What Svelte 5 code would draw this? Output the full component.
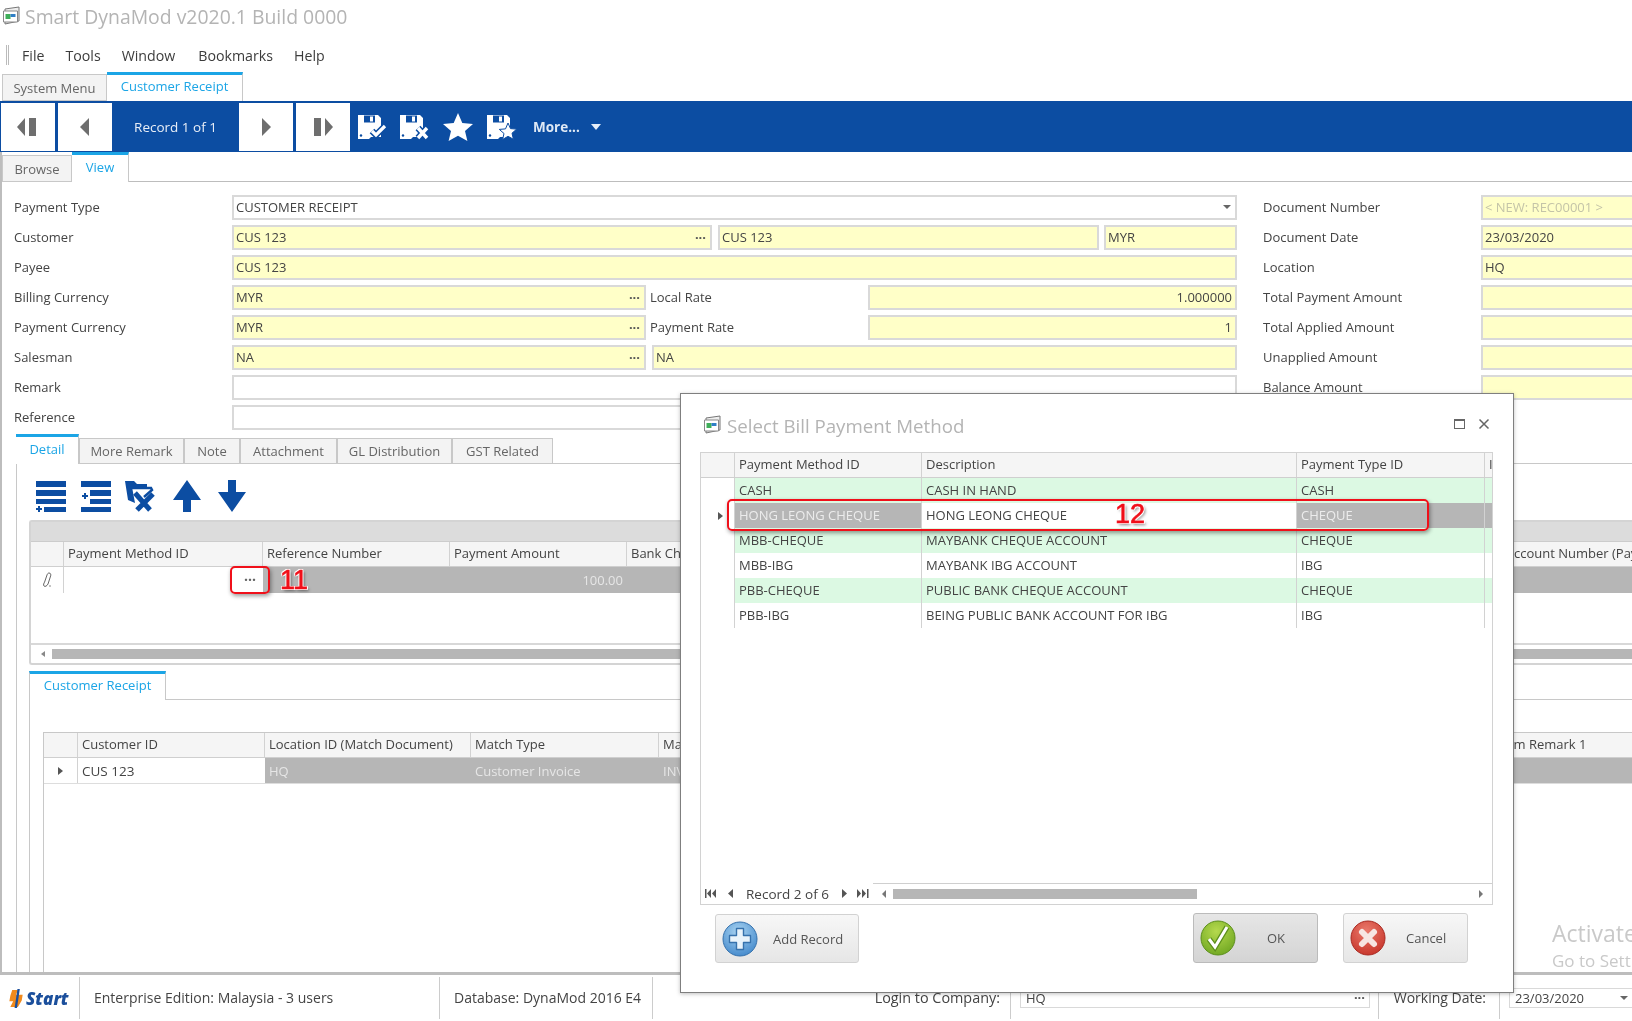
<script>
  const leftLabels = ['Payment Type','Customer','Payee','Billing Currency','Payment Currency','Salesman','Remark','Reference'];
  const rightRows = [
    ['Document Number','< NEW: REC00001 >','ghost'],
    ['Document Date','23/03/2020',''],
    ['Location','HQ',''],
    ['Total Payment Amount','',''],
    ['Total Applied Amount','',''],
    ['Unapplied Amount','',''],
    ['Balance Amount','','']
  ];
  const detailTabs = ['More Remark','Note','Attachment','GL Distribution','GST Related'];
  const methods = [
    ['CASH','CASH IN HAND','CASH','g'],
    ['HONG LEONG CHEQUE','HONG LEONG CHEQUE','CHEQUE','s'],
    ['MBB-CHEQUE','MAYBANK CHEQUE ACCOUNT','CHEQUE','g'],
    ['MBB-IBG','MAYBANK IBG ACCOUNT','IBG',''],
    ['PBB-CHEQUE','PUBLIC BANK CHEQUE ACCOUNT','CHEQUE','g'],
    ['PBB-IBG','BEING PUBLIC BANK ACCOUNT FOR IBG','IBG','']
  ];
</script>

{#snippet floppy()}
  <path d="M1 1h20l3 3v19H14l-2 2H1z" fill="#fff"/>
  <path d="M7 1.500h11v7H7z" fill="#0c4da2"/><path d="M13 2.500h3v5h-3z" fill="#fff"/>
  <circle cx="4" cy="21.500" r="1.200" fill="#0c4da2"/>
{/snippet}

{#snippet appIcon()}
  <svg class="appicon" viewBox="0 0 20 20" width="20" height="20">
    <path d="M3 3l14-2v14L3 18z" fill="#eee" stroke="#777"/>
    <path d="M1.500 5h14v11h-14z" fill="#fff" stroke="#888"/>
    <path d="M3.500 8h5v5h-5z" fill="#3fae5a"/><path d="M8.500 8h5v3h-5z" fill="#2f7fc6"/>
  </svg>
{/snippet}

<div class="app">
  <header class="title">
    {@render appIcon()}
    <span>Smart DynaMod v2020.1 Build 0000</span>
  </header>

  <nav class="menu">
    <i class="grip"></i>
    <span class="m1">File</span><span class="m2">Tools</span><span class="m3">Window</span><span class="m4">Bookmarks</span><span class="m5">Help</span>
  </nav>

  <div class="doctabs">
    <div class="tab off systab">System Menu</div>
    <div class="tab on custtab">Customer Receipt</div>
  </div>

  <div class="toolbar">
    <div class="navbtn"><svg viewBox="0 0 22 22" width="22" height="22"><path d="M8 2v18L0 11zM12 2h7v18h-7z" fill="#6e6e6e"/></svg></div>
    <div class="navbtn"><svg viewBox="0 0 22 22" width="22" height="22"><path d="M15 2v18L6 11z" fill="#6e6e6e"/></svg></div>
    <div class="rec">Record 1 of 1</div>
    <div class="navbtn"><svg viewBox="0 0 22 22" width="22" height="22"><path d="M7 2v18l9-9z" fill="#6e6e6e"/></svg></div>
    <div class="navbtn"><svg viewBox="0 0 22 22" width="22" height="22"><path d="M2 2h7v18H2zM13 2v18l8-9z" fill="#6e6e6e"/></svg></div>
    <svg class="tool t1" viewBox="0 0 31 26" width="31" height="26">{@render floppy()}<path d="M15 17l4 4 9-9" fill="none" stroke="#0c4da2" stroke-width="6.500"/><path d="M15 17l4 4 9-9" fill="none" stroke="#fff" stroke-width="3.200"/></svg>
    <svg class="tool t2" viewBox="0 0 31 26" width="31" height="26">{@render floppy()}<path d="M19 14l9 10M28 14l-9 10" stroke="#0c4da2" stroke-width="6.500"/><path d="M19 14l9 10M28 14l-9 10" stroke="#fff" stroke-width="3.400"/></svg>
    <svg class="tool t3" viewBox="0 0 30 28" width="30" height="28"><path d="M15 0l4.300 10 10.700.9-8 7.100 2.400 10L15 22.800 5.600 28 8 18 0 10.900 10.700 10z" fill="#fff"/></svg>
    <svg class="tool t4" viewBox="0 0 31 26" width="31" height="26">{@render floppy()}<path d="M22 9l2.500 5.600 6.200.5-4.700 4.100 1.400 6L22 22.300 16.600 25.500l1.400-6-4.700-4.100 6.200-.5z" fill="#fff" stroke="#0c4da2" stroke-width="1"/></svg>
    <span class="more">More...</span>
    <i class="morecaret"></i>
  </div>

  <main class="pane">
    <div class="subtabs">
      <div class="tab off browse">Browse</div>
      <div class="tab on viewtab">View</div>
    </div>

    <section class="form">
      <div class="labels">
        {#each leftLabels as l}<div class="lab">{l}</div>{/each}
      </div>
      <div class="fields">
        <div class="row"><div class="inp white grow">CUSTOMER RECEIPT<i class="ddarrow"></i></div></div>
        <div class="row">
          <div class="inp w480">CUS 123<b class="dots">···</b></div>
          <div class="inp w381">CUS 123</div>
          <div class="inp grow">MYR</div>
        </div>
        <div class="row"><div class="inp grow">CUS 123</div></div>
        <div class="row">
          <div class="inp w414">MYR<b class="dots">···</b></div>
          <div class="inlab">Local Rate</div>
          <div class="inp grow num">1.000000</div>
        </div>
        <div class="row">
          <div class="inp w414">MYR<b class="dots">···</b></div>
          <div class="inlab">Payment Rate</div>
          <div class="inp grow num">1</div>
        </div>
        <div class="row">
          <div class="inp w414">NA<b class="dots">···</b></div>
          <div class="inp grow sales">NA</div>
        </div>
        <div class="row"><div class="inp white grow"></div></div>
        <div class="row"><div class="inp white grow"></div></div>
      </div>
      <div class="labels rightlabs">
        {#each rightRows as r}<div class="lab">{r[0]}</div>{/each}
      </div>
      <div class="fields rightf">
        {#each rightRows as r}<div class="row"><div class="inp grow {r[2]}">{r[1]}</div></div>{/each}
      </div>
    </section>

    <div class="detailtabs">
      <div class="tab on dt0">Detail</div>
      {#each detailTabs as t, i}<div class="tab off dt{i + 1}">{t}</div>{/each}
    </div>

    <section class="detail">
      <div class="icons">
        <svg class="ic i1" viewBox="0 0 30 32" width="30" height="32" fill="#0c4da2"><path d="M0 1h30v6H0zM0 10h30v6H0zM0 19h30v5H0zM8 27h22v5H8zM2 26h2v2h2v2H4v2H2v-2H0v-2h2z"/></svg>
        <svg class="ic i2" viewBox="0 0 30 32" width="30" height="32" fill="#0c4da2"><path d="M0 1h30v6H0zM9 10h21v6H9zM9 19h21v5H9zM0 27h30v5H0zM3 13h2v2h2v2H5v2H3v-2H1v-2h2z"/></svg>
        <svg class="ic i3" viewBox="0 0 31 32" width="31" height="32"><path d="M0 1h9l3 3h10v3H7l3 16L3 20z" fill="#0c4da2"/><path d="M7 8l19 0 1 2-8 7" fill="none" stroke="#0c4da2" stroke-width="2.500"/><path d="M10 13l15 17M28 14L12 30" stroke="#0c4da2" stroke-width="5"/></svg>
        <svg class="ic i4" viewBox="0 0 28 32" width="28" height="32" fill="#0c4da2"><path d="M14 0l14 20H18v12h-8V20H0z"/></svg>
        <svg class="ic i5" viewBox="0 0 28 32" width="28" height="32" fill="#0c4da2"><path d="M10 0h8v12h10L14 32 0 12h10z"/></svg>
      </div>

      <div class="grid1">
        <div class="band"></div>
        <div class="ghead">
          <div class="gc c0"></div>
          <div class="gc c1">Payment Method ID</div>
          <div class="gc c2">Reference Number</div>
          <div class="gc c3">Payment Amount</div>
          <div class="gc c4">Bank Charges</div>
          <div class="gc c5">Bank Account Number (Payment)</div>
        </div>
        <div class="grow1">
          <div class="gi"><svg viewBox="0 0 10 16" width="10" height="16"><path d="M7 1c2 0 2 2 1.600 3L6 12c-1 2-3 3-4 2s0-3 .6-4L5 3c.5-1.200 1-2 2-2z" fill="none" stroke="#666" stroke-width="1"/><path d="M7 14h2" stroke="#888"/></svg></div>
          <div class="gw"></div>
          <div class="gs"><span class="amt">100.00</span></div>
        </div>
        <div class="gempty"></div>
        <div class="gscroll"><i class="al"></i><div class="thumb"></div></div>
      </div>

      <section class="lower">
        <div class="lowertabs"><div class="tab on lt">Customer Receipt</div></div>
        <div class="grid2">
          <div class="ghead h2">
            <div class="gc d0"></div>
            <div class="gc d1">Customer ID</div>
            <div class="gc d2">Location ID (Match Document)</div>
            <div class="gc d3">Match Type</div>
            <div class="gc d4">Match Document</div>
            <div class="gc d5">Item Remark 1</div>
          </div>
          <div class="grow2">
            <div class="gi g2i"><i class="ar"></i></div>
            <div class="cw">CUS 123</div>
            <div class="cs s1">HQ</div>
            <div class="cs s2">Customer Invoice</div>
            <div class="cs s3">INV</div>
          </div>
          <div class="g2rest"></div>
        </div>
      </section>
    </section>
  </main>

  <footer class="status">
    <div class="start">
      <svg viewBox="0 0 17 20" width="17" height="19"><path d="M4 1h6L8 6h7l-1 6-4 7H2l3-6H1l1-6z" fill="#f08a1d"/><path d="M9.500 0h2.500L9 20H6.500z" fill="#1b4f9c"/></svg>
      <em>Start</em>
    </div>
    <div class="sect s-a">Enterprise Edition: Malaysia - 3 users</div>
    <div class="sect s-b">Database: DynaMod 2016 E4</div>
    <div class="sect s-c">Login to Company:</div>
    <div class="sect s-d"><div class="sinp">HQ<b class="dots">···</b></div></div>
    <div class="sect s-e">Working Date:</div>
    <div class="sect s-f"><div class="sinp date">23/03/2020<i class="ddarrow"></i></div></div>
  </footer>

  <div class="note box11"></div>
  <div class="ann a11">11</div>
  <div class="ellip">···</div>

  <div class="watermark"><div class="w1">Activate Windows</div><div class="w2">Go to Settings to activate Windows.</div></div>

  <div class="dialog">
    <div class="dtitle">
      {@render appIcon()}
      <span>Select Bill Payment Method</span>
      <i class="restore"></i>
      <svg class="close" viewBox="0 0 12 12" width="12" height="12"><path d="M1.500 1.500l9 9M10.500 1.500l-9 9" stroke="#666" stroke-width="1.500"/></svg>
    </div>
    <div class="dgrid">
      <div class="dhead">
        <div class="dc e0"></div>
        <div class="dc e1">Payment Method ID</div>
        <div class="dc e2">Description</div>
        <div class="dc e3">Payment Type ID</div>
        <div class="dc e4">I</div>
      </div>
      {#each methods as m}
        <div class="drow {m[3]}">
          <div class="e0 mark">{#if m[3] === 's'}<i class="ar"></i>{/if}</div>
          <div class="dcell e1">{m[0]}</div>
          <div class="dcell e2 mid">{m[1]}</div>
          <div class="dcell e3">{m[2]}</div>
          <div class="e4 tail"></div>
        </div>
      {/each}
      <div class="dfill"></div>
      <div class="dfoot">
        <div class="pager">
          <svg viewBox="0 0 12 9" width="12" height="9" fill="#555"><path d="M0 0h1.500v9H0zM6 0v9L2 4.500zM11 0v9L7 4.500z"/></svg>
          <svg class="p2" viewBox="0 0 5 9" width="5" height="9" fill="#555"><path d="M5 0v9L0 4.500z"/></svg>
          <span>Record 2 of 6</span>
          <svg class="p3" viewBox="0 0 5 9" width="5" height="9" fill="#555"><path d="M0 0v9l5-4.500z"/></svg>
          <svg class="p4" viewBox="0 0 12 9" width="12" height="9" fill="#555"><path d="M0 0v9l4-4.500zM5 0v9l4-4.500zM10 0h1.500v9H10z"/></svg>
        </div>
        <div class="dscroll">
          <svg viewBox="0 0 4 8" width="4" height="8" fill="#777"><path d="M4 0v8L0 4z"/></svg>
          <div class="dthumb"></div>
          <svg class="rg" viewBox="0 0 4 8" width="4" height="8" fill="#777"><path d="M0 0v8l4-4z"/></svg>
        </div>
      </div>
    </div>
    <div class="dbtns">
      <div class="btn add">
        <svg viewBox="0 0 36 36" width="36" height="36"><defs><radialGradient id="bl" cx=".45" cy=".3" r=".8"><stop offset="0" stop-color="#a9d4f2"/><stop offset="1" stop-color="#3a82c8"/></radialGradient></defs><circle cx="18" cy="18" r="17" fill="url(#bl)" stroke="#3672ad"/><path d="M14.500 7.500h7v7h7v7h-7v7h-7v-7h-7v-7h7z" fill="#e8f3fb" stroke="#3672ad" stroke-width="1.400" stroke-linejoin="round"/></svg>
        <span class="at">Add Record</span>
      </div>
      <div class="btn ok">
        <svg viewBox="0 0 36 36" width="36" height="36"><defs><radialGradient id="gr" cx=".45" cy=".3" r=".8"><stop offset="0" stop-color="#b5d94e"/><stop offset="1" stop-color="#6aa31e"/></radialGradient></defs><circle cx="18" cy="18" r="17" fill="url(#gr)" stroke="#5c8f1c"/><path d="M9 19l6 8L27 7" fill="none" stroke="#5c8f1c" stroke-width="5.500"/><path d="M9 19l6 8L27 7" fill="none" stroke="#fff" stroke-width="3"/></svg>
        <span class="ot">OK</span>
      </div>
      <div class="btn cancel">
        <svg viewBox="0 0 36 36" width="36" height="36"><defs><radialGradient id="rd" cx=".45" cy=".3" r=".8"><stop offset="0" stop-color="#ea7a6c"/><stop offset="1" stop-color="#c42f25"/></radialGradient></defs><circle cx="18" cy="18" r="17" fill="url(#rd)" stroke="#a92a22"/><path d="M12 12l12 12M24 12L12 24" stroke="#f7e6e3" stroke-width="6" stroke-linecap="round"/></svg>
        <span class="ct">Cancel</span>
      </div>
    </div>
    <div class="note box12"></div>
    <div class="ann a12">12</div>
  </div>
</div>

<style>
  :global(body) { margin: 0; background: #fff; }
  .app {
    position: relative; width: 1632px; height: 1021px; overflow: hidden; background: #fff;
    display: flex; flex-direction: column;
    font-family: "Open Sans", "DejaVu Sans", sans-serif; font-size: 13px; color: #444;
    filter: blur(0.4px);
  }
  .title { height: 36px; display: flex; align-items: center; padding: 0 0 4px 2px; box-sizing: border-box; flex: none; }
  .title span { margin-left: 3px; font-size: 19.400px; color: #b4b4b4; }
  .appicon { flex: none; }

  .menu { height: 36px; flex: none; display: flex; align-items: center; padding-top: 2px; box-sizing: border-box; font-size: 14.200px; color: #3c3c3c; }
  .grip { width: 3px; height: 20px; margin-left: 6px; border-left: 1px solid #bbb; border-right: 1px solid #bbb; box-sizing: border-box; }
  .m1 { margin-left: 13px; } .m2 { margin-left: 21px; } .m3 { margin-left: 21px; } .m4 { margin-left: 23px; } .m5 { margin-left: 21px; }

  .tab { box-sizing: border-box; display: flex; align-items: center; justify-content: center; flex: none; }
  .tab.off { background: #f3f3f3; border: 1px solid #c8c8c8; color: #666; }
  .tab.on { background: #fff; border-top: 3px solid #1ba5e6; border-right: 1px solid #c8c8c8; color: #1ba5e6; padding-bottom: 4px; }

  .doctabs { height: 29px; flex: none; display: flex; align-items: flex-end; padding-left: 2px; }
  .systab { width: 105px; height: 27px; }
  .custtab { width: 136px; height: 29px; }

  .toolbar { height: 51px; flex: none; background: #0c4da2; display: flex; align-items: center; padding-left: 1px; color: #fff; box-sizing: border-box; padding-top: 1px; }
  .navbtn { width: 54px; height: 48px; background: #fff; margin-right: 3px; display: flex; align-items: center; justify-content: center; flex: none; }
  .rec { width: 121px; margin-right: 3px; text-align: center; color: #e8eef7; font-size: 13.500px; flex: none; }
  .tool { flex: none; }
  .t1 { margin-left: 4px; } .t2 { margin-left: 11px; } .t3 { margin-left: 13px; } .t4 { margin-left: 13px; }
  .more { margin-left: 16px; font-weight: 700; font-size: 13.500px; color: #dfe9f5; }
  .morecaret { margin-left: 11px; width: 0; height: 0; border-left: 5px solid transparent; border-right: 5px solid transparent; border-top: 6px solid #e6eef8; }

  .pane { flex: 1; min-height: 0; display: flex; flex-direction: column; border-left: 2px solid #bdbdbd; border-bottom: 3px solid #bdbdbd; box-sizing: border-box; }
  .subtabs { height: 30px; flex: none; display: flex; align-items: flex-end; }
  .subtabs::after { content: ""; flex: 1; border-bottom: 1px solid #bdbdbd; height: 0; }
  .browse { width: 70px; height: 27px; border-left: 1px solid #c8c8c8; }
  .viewtab { width: 57px; height: 30px; border-bottom: 0; }

  .form { flex: none; height: 252px; box-sizing: border-box; padding: 13px 0 0 12px; display: flex; }
  .labels { width: 218px; flex: none; display: flex; flex-direction: column; gap: 5px; }
  .lab { height: 25px; line-height: 24px; white-space: nowrap; }
  .fields { width: 1005px; flex: none; display: flex; flex-direction: column; gap: 5px; }
  .rightlabs { margin-left: 26px; }
  .rightf { width: 170px; }
  .row { display: flex; height: 25px; gap: 6px; }
  .inp { height: 25px; box-sizing: border-box; border: 2px solid #d9d9d9; background: #ffffc8; color: #444; line-height: 20px; padding-left: 2px; position: relative; white-space: nowrap; flex: none; }
  .inp.white { background: #fff; }
  .grow { flex: 1; }
  .w480 { width: 480px; } .w381 { width: 381px; } .w414 { width: 414px; }
  .row .w480 + .w381 + .grow { margin-left: -1px; }
  .inlab { width: 212px; margin-left: -2px; line-height: 24px; flex: none; }
  .num { text-align: right; padding-right: 3px; }
  .ghost { color: #c4c4a8; }
  .dots { position: absolute; right: 4px; top: 0; font-weight: 700; color: #555; font-size: 13px; }
  .ddarrow { position: absolute; right: 4px; top: 8px; width: 0; height: 0; border-left: 4px solid transparent; border-right: 4px solid transparent; border-top: 4px solid #666; }

  .detailtabs { height: 30px; flex: none; display: flex; align-items: flex-end; margin-left: 14px; }
  .detailtabs::after { content: ""; flex: 1; border-bottom: 1px solid #c8c8c8; height: 0; }
  .dt0 { width: 63px; height: 30px; }
  .dt1 { width: 105px; height: 26px; } .dt2 { width: 56px; height: 26px; } .dt3 { width: 97px; height: 26px; } .dt4 { width: 115px; height: 26px; } .dt5 { width: 101px; height: 26px; }

  .detail { flex: 1; min-height: 0; margin-left: 14px; border-left: 1px solid #c8c8c8; display: flex; flex-direction: column; }
  .icons { height: 56px; flex: none; display: flex; align-items: flex-start; padding-top: 16px; box-sizing: border-box; }
  .ic { flex: none; }
  .i1 { margin-left: 19px; } .i2 { margin-left: 15px; } .i3 { margin-left: 14px; } .i4 { margin-left: 17px; } .i5 { margin-left: 17px; }

  .grid1 { flex: none; margin-left: 12px; height: 145px; border: 2px solid #d4d4d4; border-right: 0; border-radius: 3px 0 0 3px; box-sizing: border-box; display: flex; flex-direction: column; width: 1640px; }
  .band { height: 19px; background: #dcdcdc; flex: none; border-bottom: 1px solid #ccc; }
  .ghead { height: 25px; flex: none; display: flex; background: #f5f5f5; border-bottom: 1px solid #cfcfcf; box-sizing: border-box; }
  .gc { box-sizing: border-box; border-right: 1px solid #d2d2d2; line-height: 22px; padding-left: 4px; white-space: nowrap; overflow: hidden; flex: none; }
  .c0 { width: 33px; } .c1 { width: 199px; } .c2 { width: 187px; } .c3 { width: 177px; } .c4 { width: 841px; } .c5 { width: 203px; }
  .grow1 { height: 26px; flex: none; display: flex; }
  .gi { width: 33px; flex: none; border-right: 1px solid #d2d2d2; box-sizing: border-box; display: flex; align-items: center; justify-content: center; }
  .gw { width: 199px; flex: none; }
  .gs { flex: 1; background: #b6b6b6; color: #e6e6e6; position: relative; }
  .amt { position: absolute; left: 300px; line-height: 26px; width: 60px; text-align: right; }
  .gempty { flex: 1; border-bottom: 2px solid #d8d8d8; }
  .gscroll { height: 18px; flex: none; display: flex; align-items: center; padding-left: 10px; box-sizing: border-box; }
  .al { width: 0; height: 0; border-top: 3.500px solid transparent; border-bottom: 3.500px solid transparent; border-right: 4px solid #888; margin-right: 7px; }
  .thumb { flex: 1; height: 10px; background: #b6b6b6; }

  .lower { flex: 1; min-height: 0; margin: 6px 0 0 12px; border-left: 1px solid #c8c8c8; display: flex; flex-direction: column; }
  .lowertabs { height: 29px; flex: none; display: flex; align-items: flex-end; margin-left: -1px; }
  .lowertabs::after { content: ""; flex: 1; border-bottom: 1px solid #c8c8c8; height: 0; }
  .lt { width: 137px; height: 29px; border-left: 1px solid #c8c8c8; }
  .grid2 { flex: 1; min-height: 0; margin: 32px 0 0 13px; border-left: 1px solid #c8c8c8; width: 1640px; border-top: 1px solid #c8c8c8; display: flex; flex-direction: column; }
  .d0 { width: 34px; } .d1 { width: 187px; } .d2 { width: 206px; } .d3 { width: 188px; } .d4 { width: 835px; } .d5 { width: 190px; }
  .grow2 { height: 26px; flex: none; display: flex; line-height: 26px; border-bottom: 1px solid #ddd; box-sizing: border-box; }
  .g2i { width: 34px; }
  .cw { width: 187px; padding-left: 4px; box-sizing: border-box; flex: none; font-size: 13.500px; }
  .cs { background: #b6b6b6; color: #e6e6e6; padding-left: 4px; box-sizing: border-box; flex: none; }
  .s1 { width: 206px; } .s2 { width: 188px; } .s3 { flex: 1; }
  .ar { width: 0; height: 0; border-top: 4.500px solid transparent; border-bottom: 4.500px solid transparent; border-left: 5px solid #555; }
  .g2rest { flex: 1; }

  .status { height: 46px; flex: none; display: flex; align-items: center; font-size: 14px; }
  .start { width: 80px; height: 42px; flex: none; display: flex; align-items: center; padding-left: 8px; box-sizing: border-box; border-right: 1px solid #ccc; }
  .start em { font: italic 800 17px "Open Sans", sans-serif; color: #1b4f9c; margin-left: 1px; }
  .sect { height: 42px; line-height: 42px; flex: none; box-sizing: border-box; white-space: nowrap; }
  .s-a { width: 360px; padding-left: 14px; border-right: 1px solid #ccc; }
  .s-b { width: 213px; padding-left: 14px; border-right: 1px solid #ccc; }
  .s-c { width: 358px; text-align: right; padding-right: 10px; border-right: 1px solid #ccc; font-size: 14.400px; }
  .s-d { width: 368px; padding-left: 9px; border-right: 1px solid #ccc; }
  .s-e { width: 121px; text-align: right; padding-right: 13px; border-right: 1px solid #ccc; }
  .s-f { flex: 1; padding-left: 9px; }
  .sinp { height: 20px; line-height: 18px; margin-top: 11px; border: 1px solid #d9d9d9; font-size: 13px; position: relative; padding-left: 5px; width: 350px; box-sizing: border-box; }
  .date { width: 123px; border-right: 0; }
  .sinp .dots { top: -1px; }
  .sinp .ddarrow { top: 7px; }

  .watermark { position: absolute; left: 1552px; top: 918px; white-space: nowrap; color: #c9c9c9; }
  .w1 { font-size: 23px; line-height: 30px; }
  .w2 { font-size: 17px; line-height: 26px; }

  .note { position: absolute; box-sizing: border-box; border: 2px solid #f0101a; border-radius: 5px; box-shadow: 1px 2px 4px rgba(0,0,0,.4); }
  .box11 { left: 230px; top: 566px; width: 40px; height: 28px; }
  .ellip { position: absolute; left: 232px; top: 567px; width: 36px; height: 26px; text-align: center; line-height: 25px; font-weight: 700; color: #666; font-size: 14px; }
  .ann { position: absolute; color: #f0101a; font-family: "Liberation Sans", sans-serif; font-size: 27px; -webkit-text-stroke: 0.6px #f0101a; text-shadow: 1px 0 0 #fff, -1px 0 0 #fff, 0 1px 0 #fff, 0 -1px 0 #fff, 1px 1px 0 #fff, -1px -1px 0 #fff, 1px -1px 0 #fff, -1px 1px 0 #fff, 2px 2px 3px rgba(0,0,0,.5); line-height: 30px; }
  .a11 { left: 280px; top: 565px; }

  .dialog { position: absolute; left: 680px; top: 393px; width: 834px; height: 600px; box-sizing: border-box; background: #fff; border: 1px solid #7f7f7f; box-shadow: 0 1px 4px rgba(0,0,0,.25); display: flex; flex-direction: column; }
  .dtitle { height: 58px; flex: none; display: flex; align-items: center; position: relative; padding: 4px 0 0 22px; box-sizing: border-box; }
  .dtitle span { margin-left: 4px; font-size: 18.700px; color: #b4b4b4; }
  .restore { position: absolute; left: 773px; top: 25px; width: 11px; height: 10px; box-sizing: border-box; border: 1px solid #666; border-top-width: 2px; }
  .close { position: absolute; left: 797px; top: 24px; }
  .dgrid { margin-left: 19px; width: 793px; height: 453px; flex: none; box-sizing: border-box; border: 1px solid #d2d2d2; display: flex; flex-direction: column; }
  .dhead { height: 25px; flex: none; display: flex; background: #f5f5f5; border-bottom: 1px solid #cfcfcf; box-sizing: border-box; }
  .dc { box-sizing: border-box; border-right: 1px solid #d2d2d2; padding-left: 4px; line-height: 22px; flex: none; white-space: nowrap; overflow: hidden; }
  .e0 { width: 34px; flex: none; box-sizing: border-box; border-right: 1px solid #d2d2d2; }
  .e1 { width: 187px; } .e2 { width: 375px; } .e3 { width: 188px; } .e4 { flex: 1; }
  .dhead .e4 { border-right: 0; }
  .drow { height: 25px; flex: none; display: flex; }
  .dcell { box-sizing: border-box; padding-left: 4px; line-height: 25px; border-right: 1px solid #d2d2d2; flex: none; white-space: nowrap; }
  .mark { background: #fff; display: flex; align-items: center; justify-content: flex-end; padding-right: 11px; }
  .tail { border: 0; }
  .drow.g .dcell, .drow.g .tail { background: #dcf9e3; }
  .drow.s .dcell, .drow.s .tail { background: #b6b6b6; color: #ececec; }
  .drow.s .mid { background: #fff; color: #444; }
  .dfill { flex: 1; }
  .dfoot { height: 21px; flex: none; display: flex; align-items: center; }
  .pager { width: 172px; flex: none; display: flex; align-items: center; padding-left: 4px; box-sizing: border-box; }
  .pager span { margin: 0 13px 0 13px; font-size: 13.500px; }
  .pager .p2 { margin-left: 11px; }
  .pager .p4 { margin-left: 10px; }
  .dscroll { flex: 1; height: 21px; border-top: 1px solid #cfcfcf; display: flex; align-items: center; margin-top: -1px; box-sizing: border-box; padding: 0 9px; }
  .dthumb { width: 304px; height: 10px; background: #b6b6b6; margin-left: 7px; }
  .rg { margin-left: auto; }
  .dbtns { position: relative; flex: 1; }
  .btn { position: absolute; box-sizing: border-box; border: 1px solid #d2d2d2; border-radius: 3px; background: linear-gradient(#f7f7f7, #e6e6e6); display: flex; align-items: center; padding-left: 6px; height: 49px; }
  .btn span { position: absolute; white-space: nowrap; color: #555; }
  .add { left: 34px; top: 9px; width: 144px; }
  .at { left: 57px; }
  .ok { left: 512px; top: 8px; width: 125px; height: 50px; background: linear-gradient(#e6e6e6, #d4d4d4); border-color: #bbb; }
  .ot { left: 73px; }
  .cancel { left: 662px; top: 8px; width: 125px; height: 50px; }
  .ct { left: 62px; }
  .box12 { left: 46px; top: 105px; width: 702px; height: 32px; }
  .a12 { left: 434px; top: 105px; }
</style>
